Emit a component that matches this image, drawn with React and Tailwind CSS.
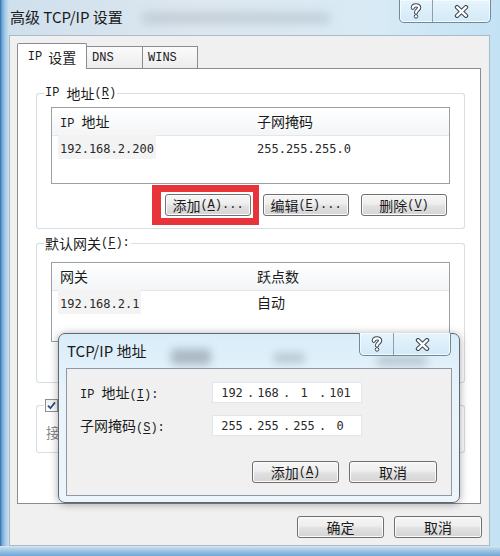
import React from 'react';

// latin bits in the old dialog font look mono
const M = ({ children }) => <span className="font-['Liberation_Mono',monospace] text-[12px]">{children}</span>;

const Acc = ({ k, tail = '' }) => (
    <M>
        (<span className="underline underline-offset-2">{k}</span>){tail}
    </M>
);

const Btn = ({ children, className = '' }) => (
    <button
        type="button"
        className={`flex h-[22px] items-center justify-center rounded-[3px] border border-[#707070] bg-[linear-gradient(#f6f6f6,#eeeeee_45%,#e1e1e1_55%,#d4d4d4)] leading-none text-[#1b1b1b] shadow-[inset_0_0_0_1px_#fbfbfb] ${className}`}
    >
        {children}
    </button>
);

const QuestionIcon = () => (
    <svg width="12" height="16" viewBox="0 0 12 16">
        <g fill="none" strokeLinecap="round" strokeLinejoin="round">
            <path d="M2.8 4.8C2.8 1.6 9.2 1.4 9.2 4.6 9.2 6.8 6 7 6 9.6" stroke="#3d4a55" strokeWidth="4.2" />
            <path d="M2.8 4.8C2.8 1.6 9.2 1.4 9.2 4.6 9.2 6.8 6 7 6 9.6" stroke="#ffffff" strokeWidth="2.2" />
        </g>
        <circle cx="6" cy="13.4" r="1.8" fill="#ffffff" stroke="#3d4a55" strokeWidth="1" />
    </svg>
);

const CloseIcon = () => (
    <svg width="15" height="13" viewBox="0 0 15 13">
        <path d="M3 2.2 12 10.8M12 2.2 3 10.8" stroke="#3d4a55" strokeWidth="4.4" strokeLinecap="round" />
        <path d="M3 2.2 12 10.8M12 2.2 3 10.8" stroke="#ffffff" strokeWidth="2.3" strokeLinecap="round" />
    </svg>
);

const CaptionButtons = ({ help = 'w-[33px]', close = 'w-[56px]' }) => (
    <div className="flex h-[23px] overflow-hidden rounded-b-[5px] border border-t-0 border-[#71889b] bg-[linear-gradient(#e6f4fc,#d2eaf7)] shadow-[inset_0_0_0_1px_#f4fbff]">
        <div className={`flex items-center justify-center border-r border-[#8aa0b1] ${help}`}>
            <QuestionIcon />
        </div>
        <div className={`flex items-center justify-center ${close}`}>
            <CloseIcon />
        </div>
    </div>
);

// group box: label sits on the top border line
const Group = ({ label, className = '', bodyClass = '', children }) => (
    <div className={className}>
        <div className="flex h-[16px] items-center">
            <div className="h-[8px] w-[8px] self-end rounded-tl-[3px] border-l border-t border-[#d5dfe5]" />
            <div className="flex items-center px-[1px] leading-[16px]">{label}</div>
            <div className="h-[8px] flex-1 self-end rounded-tr-[3px] border-r border-t border-[#d5dfe5]" />
        </div>
        <div className={`rounded-b-[3px] border-x border-b border-[#d5dfe5] px-[14px] ${bodyClass}`}>{children}</div>
    </div>
);

const ListBox = ({ head, row, className = '' }) => (
    <div className={`border border-[#9ba0a7] bg-white ${className}`}>
        <div className="flex h-[28px] items-center border-b border-[#e3e6ea] bg-[linear-gradient(#ffffff,#f3f5f7)]">
            <div className="w-[199px] pl-[8px]">{head[0]}</div>
            <div className="pl-[6px]">{head[1]}</div>
        </div>
        <div className="flex h-[23px] items-center">
            <div className="w-[199px] pl-[6px]">
                <span className="bg-[#f3f3f3] px-[2px] py-[2px]">{row[0]}</span>
            </div>
            <div className="pl-[6px]">{row[1]}</div>
        </div>
    </div>
);

const Ip = ({ children }) => <span className="font-['DejaVu_Sans_Mono',monospace] text-[12px] text-[#2a2a2a]">{children}</span>;

const IpField = ({ parts }) => (
    <div className="flex h-[21px] w-[150px] items-center border border-[#e2e5e9] bg-white pl-[4px] font-['DejaVu_Sans_Mono',monospace] text-[12px] text-[#2a2a2a]">
        {parts.map((p, i) => (
            <React.Fragment key={i}>
                {i > 0 && <span className="w-[6px] text-center">.</span>}
                <span className="w-[30px] text-center">{p}</span>
            </React.Fragment>
        ))}
    </div>
);

const Checkbox = () => (
    <div className="flex h-[13px] w-[13px] items-center justify-center border border-[#8f8f8f] bg-[linear-gradient(#f0f0f0,#ffffff)]">
        <svg width="9" height="9" viewBox="0 0 9 9">
            <path d="M1 4.6 3.4 7.2 8 1.4" fill="none" stroke="#2b4d8c" strokeWidth="1.8" />
        </svg>
    </div>
);

export default function App() {
    return (
        <div className="relative flex h-[556px] w-[500px] flex-col overflow-hidden bg-[linear-gradient(90deg,#2f6aa3_0px,#6ea8d8_2px,#a2c9e8_5px,#cfe0ed_9px,#dde7ef_40%,#d8eaf5_75%,#c3e2f4_100%)] font-['Noto_Sans_CJK_SC',sans-serif] text-[14px] text-[#1b1b1b]">
            {/* title bar */}
            <div className="flex h-[35px] shrink-0 items-start">
                <div className="pl-[10px] pt-[7px] text-[15px] leading-[20px]">高级 TCP/IP 设置</div>
                <div className="ml-[18px] mt-[12px] h-[12px] w-[190px] rounded-full bg-[#8d9aa6] opacity-30 blur-[5px]" />
                <div className="ml-auto mr-[9px]">
                    <CaptionButtons help="w-[33px]" close="w-[57px]" />
                </div>
            </div>

            {/* client */}
            <div className="ml-[9px] flex h-[511px] w-[481px] shrink-0 flex-col border border-[#a9bac8] bg-[#f0f0f0] px-[7px] pt-[7px]">
                <div className="flex items-end">
                    <div className="relative z-10 -mb-px flex h-[26px] w-[70px] items-center justify-center gap-[6px] rounded-t-[2px] border border-b-0 border-[#898c95] bg-white pt-[1px]">
                        <M>IP</M>
                        <span>设置</span>
                    </div>
                    <div className="flex h-[22px] w-[56px] items-center border-r border-t border-[#898c95] bg-[linear-gradient(#fbfbfb,#ececec)] pl-[5px]">
                        <M>DNS</M>
                    </div>
                    <div className="flex h-[22px] w-[55px] items-center border-r border-t border-[#898c95] bg-[linear-gradient(#fbfbfb,#ececec)] pl-[5px]">
                        <M>WINS</M>
                    </div>
                </div>

                <div className="h-[436px] w-[464px] border border-[#898c95] bg-white pl-[18px] pr-[15px] pt-[16px]">
                    <Group
                        label={
                            <>
                                <M>IP{'\u00a0'}</M>地址<Acc k="R" />
                            </>
                        }
                        bodyClass="pt-[6px] pb-[12px]"
                    >
                        <ListBox
                            className="h-[77px]"
                            head={[
                                <>
                                    <M>IP{'\u00a0'}</M>地址
                                </>,
                                '子网掩码',
                            ]}
                            row={[<Ip>192.168.2.200</Ip>, <Ip>255.255.255.0</Ip>]}
                        />
                        <div className="mt-[10px] flex justify-end gap-[12px] pr-[3px]">
                            <div className="relative">
                                <Btn className="w-[86px]">
                                    添加<Acc k="A" tail="..." />
                                </Btn>
                                <div className="pointer-events-none absolute -bottom-[9px] -left-[13px] -right-[8px] -top-[9px] border-b-[7px] border-l-[9px] border-r-[6px] border-t-[7px] border-[#e8333a]" />
                            </div>
                            <Btn className="w-[86px]">
                                编辑<Acc k="E" tail="..." />
                            </Btn>
                            <Btn className="w-[86px]">
                                删除<Acc k="V" />
                            </Btn>
                        </div>
                    </Group>

                    <Group
                        className="mt-[6px]"
                        label={
                            <>
                                默认网关<Acc k="F" tail=":" />
                            </>
                        }
                        bodyClass="pt-[11px] pb-[10px]"
                    >
                        <ListBox className="h-[80px]" head={['网关', '跃点数']} row={[<Ip>192.168.2.1</Ip>, '自动']} />
                        <div className="mt-[8px] flex justify-end gap-[12px] pr-[3px]">
                            <Btn className="w-[86px]">
                                添加<Acc k="D" tail="..." />
                            </Btn>
                            <Btn className="w-[86px]">
                                编辑<Acc k="T" tail="..." />
                            </Btn>
                            <Btn className="w-[86px]">
                                删除<Acc k="M" />
                            </Btn>
                        </div>
                    </Group>

                    <Group
                        className="mt-[14px]"
                        label={
                            <>
                                <Checkbox />
                                <span className="pl-[4px]">
                                    自动跃点<Acc k="U" />
                                </span>
                            </>
                        }
                        bodyClass="pt-[11px] pb-[9px] !pl-[9px]"
                    >
                        <div className="leading-[16px] text-[#8a8a8a]">
                            接口跃点数<Acc k="N" tail=":" />
                        </div>
                    </Group>
                </div>

                <div className="mt-[12px] flex justify-end gap-[10px]">
                    <Btn className="w-[87px]">确定</Btn>
                    <Btn className="w-[88px]">取消</Btn>
                </div>
            </div>

            {/* bottom frame */}
            <div className="flex-1 bg-[linear-gradient(#d6e4ee,#9cc4e4_50%,#6fa6d6)]" />

            {/* TCP/IP 地址 dialog */}
            <div className="absolute left-[58px] top-[333px] flex h-[170px] w-[402px] flex-col rounded-[7px] border border-[#5d6975] bg-[linear-gradient(#d9edf9,#e8f3fa_35%,#eef5fa)] px-[7px] pb-[6px] shadow-[0_1px_8px_rgba(0,0,0,0.35)]">
                <div className="absolute left-[112px] top-[15px] h-[16px] w-[40px] rounded bg-[#5c6a78] opacity-40 blur-[4px]" />
                <div className="absolute left-[214px] top-[19px] h-[10px] w-[32px] rounded bg-[#5c6a78] opacity-30 blur-[4px]" />
                <div className="absolute left-[318px] top-[22px] h-[10px] w-[50px] rounded bg-[#5c6a78] opacity-30 blur-[4px]" />

                <div className="relative flex h-[34px] shrink-0 items-start">
                    <div className="pl-[1px] pt-[7px] text-[15px] leading-[20px]">TCP/IP 地址</div>
                    <div className="-mt-px ml-auto mr-[1px]">
                        <CaptionButtons help="w-[34px]" close="w-[56px]" />
                    </div>
                </div>

                <div className="relative flex-1 border border-[#8d99a5] bg-[#f0f0f0] pl-[13px] pr-[14px] pt-[13px]">
                    <div className="flex h-[21px] items-center">
                        <div className="w-[132px]">
                            <M>IP{'\u00a0'}</M>地址<Acc k="I" tail=":" />
                        </div>
                        <IpField parts={['192', '168', '1', '101']} />
                    </div>
                    <div className="mt-[12px] flex h-[21px] items-center">
                        <div className="w-[132px]">
                            子网掩码<Acc k="S" tail=":" />
                        </div>
                        <IpField parts={['255', '255', '255', '0']} />
                    </div>
                    <div className="mt-[25px] flex justify-end gap-[10px]">
                        <Btn className="w-[87px]">
                            添加<Acc k="A" />
                        </Btn>
                        <Btn className="w-[88px]">取消</Btn>
                    </div>
                </div>
            </div>
        </div>
    );
}
